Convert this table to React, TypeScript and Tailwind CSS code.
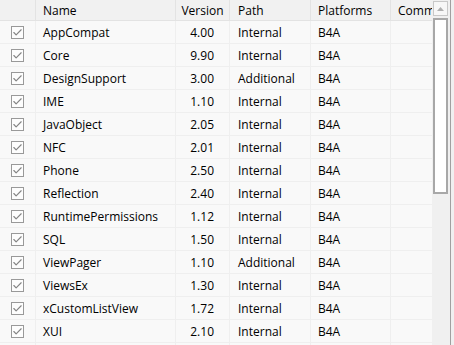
import { Check } from 'lucide-react';

interface Lib {
  name: string;
  version: string;
  path: string;
}

const libs: Lib[] = [
  { name: 'AppCompat', version: '4.00', path: 'Internal' },
  { name: 'Core', version: '9.90', path: 'Internal' },
  { name: 'DesignSupport', version: '3.00', path: 'Additional' },
  { name: 'IME', version: '1.10', path: 'Internal' },
  { name: 'JavaObject', version: '2.05', path: 'Internal' },
  { name: 'NFC', version: '2.01', path: 'Internal' },
  { name: 'Phone', version: '2.50', path: 'Internal' },
  { name: 'Reflection', version: '2.40', path: 'Internal' },
  { name: 'RuntimePermissions', version: '1.12', path: 'Internal' },
  { name: 'SQL', version: '1.50', path: 'Internal' },
  { name: 'ViewPager', version: '1.10', path: 'Additional' },
  { name: 'ViewsEx', version: '1.30', path: 'Internal' },
  { name: 'xCustomListView', version: '1.72', path: 'Internal' },
  { name: 'XUI', version: '2.10', path: 'Internal' },
];

const cell = 'h-full flex items-center border-r border-[#efefef] shrink-0';

export default function App() {
  return (
    <div
      className="w-[454px] h-[345px] overflow-hidden flex bg-[#f9f9f9] text-[12px] text-black"
      style={{ fontFamily: '"Open Sans", "Liberation Sans", sans-serif' }}
    >
      {/* Tabla */}
      <div className="w-[432px] h-full overflow-hidden shrink-0">
        <div className="w-[520px]">
          {/* Encabezado */}
          <div className="flex h-[21px] bg-[#f1f1f1] border-b border-[#e3e3e3]">
            <div className="w-[36px] h-full border-r border-[#e3e3e3] shrink-0" />
            <div className="w-[140px] h-full flex items-center pl-[7px] pt-[2px] border-r border-[#e3e3e3] shrink-0">Name</div>
            <div className="w-[54px] h-full flex items-center justify-center pt-[2px] border-r border-[#e3e3e3] shrink-0">Version</div>
            <div className="w-[81px] h-full flex items-center pl-[8px] pt-[2px] border-r border-[#e3e3e3] shrink-0">Path</div>
            <div className="w-[80px] h-full flex items-center pl-[7px] pt-[2px] border-r border-[#e3e3e3] shrink-0">Platforms</div>
            <div className="w-[120px] h-full flex items-center pl-[7px] pt-[2px] shrink-0">Comments</div>
          </div>

          {libs.map((lib) => (
            <div key={lib.name} className="flex h-[23px] border-b border-[#efefef]">
              <div className={`${cell} w-[36px] pl-[11px]`}>
                <div className="w-[13px] h-[13px] border border-[#999999] bg-[#fdfdfd] flex items-center justify-center">
                  <Check size={11} strokeWidth={2.5} color="#858585" />
                </div>
              </div>
              <div className={`${cell} w-[140px] pl-[7px] pt-[2px]`}>{lib.name}</div>
              <div className={`${cell} w-[54px] justify-end pr-[15px] pt-[2px]`}>{lib.version}</div>
              <div className={`${cell} w-[81px] pl-[8px] pt-[2px]`}>{lib.path}</div>
              <div className={`${cell} w-[80px] pl-[7px] pt-[2px]`}>B4A</div>
              <div className={`${cell} w-[120px]`} />
            </div>
          ))}
          {/* fila siguiente, recortada */}
          <div className="flex h-[23px]">
            <div className={`${cell} w-[36px]`} />
            <div className={`${cell} w-[140px]`} />
            <div className={`${cell} w-[54px]`} />
            <div className={`${cell} w-[81px]`} />
            <div className={`${cell} w-[80px]`} />
            <div className={`${cell} w-[120px]`} />
          </div>
        </div>
      </div>

      {/* Barra de desplazamiento */}
      <div className="w-[18px] h-full bg-[#f0f0f0] shrink-0 flex flex-col pl-[1px] pt-[1px]">
        <div className="w-[15px] h-[15px] border border-[#c8c8c8] bg-[#f7f7f7] flex items-center justify-center">
          <svg width="7" height="4" viewBox="0 0 7 4">
            <path d="M0 4 L3.5 0 L7 4 Z" fill="#b0b0b0" />
          </svg>
        </div>
        <div className="w-[15px] h-[176px] mt-[2px] border-2 border-[#a8a8a8] bg-white" />
      </div>
      <div className="w-px h-full bg-[#a0a0a0] shrink-0" />
      <div className="flex-1 h-full bg-[#f0f0f0]" />
    </div>
  );
}
